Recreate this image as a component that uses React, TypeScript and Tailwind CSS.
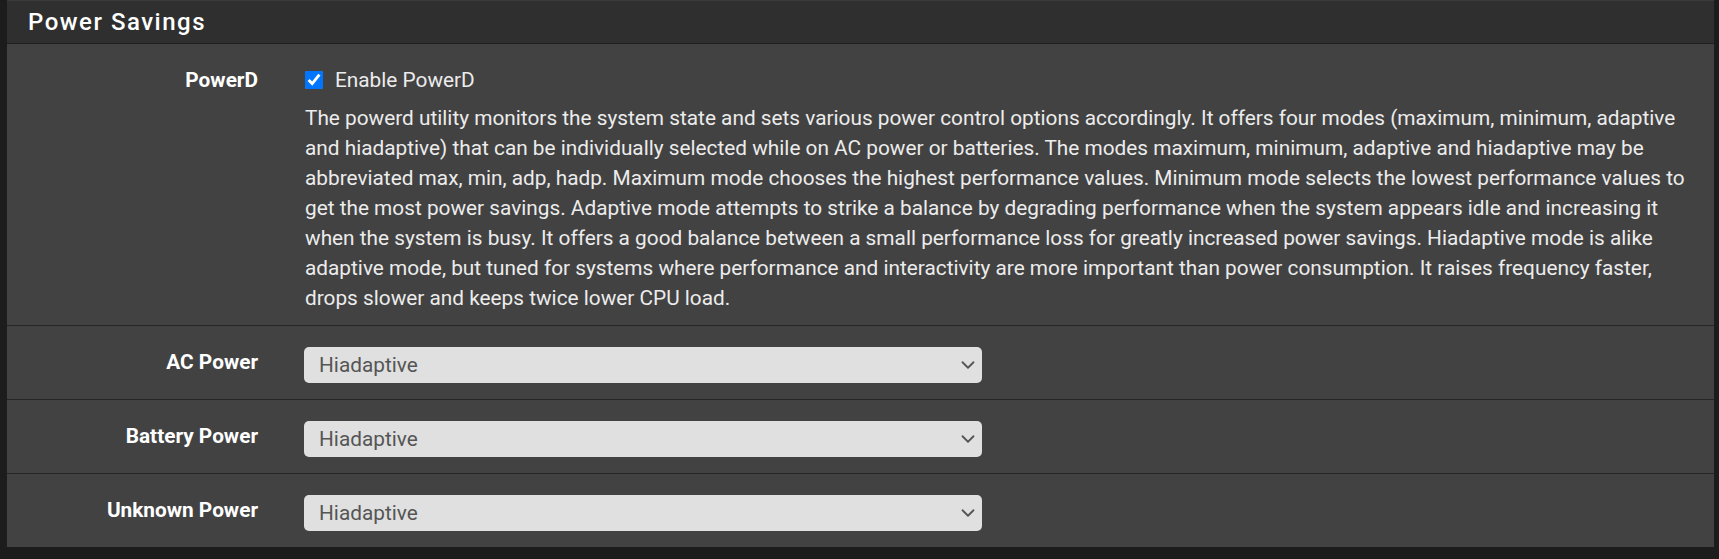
import React, { useState } from 'react';
import { ChevronDown } from 'lucide-react';

const description =
    'The powerd utility monitors the system state and sets various power control options accordingly. It offers four modes (maximum, minimum, adaptive and hiadaptive) that can be individually selected while on AC power or batteries. The modes maximum, minimum, adaptive and hiadaptive may be abbreviated max, min, adp, hadp. Maximum mode chooses the highest performance values. Minimum mode selects the lowest performance values to get the most power savings. Adaptive mode attempts to strike a balance by degrading performance when the system appears idle and increasing it when the system is busy. It offers a good balance between a small performance loss for greatly increased power savings. Hiadaptive mode is alike adaptive mode, but tuned for systems where performance and interactivity are more important than power consumption. It raises frequency faster, drops slower and keeps twice lower CPU load.';

const modes = ['Maximum', 'Minimum', 'Adaptive', 'Hiadaptive'];

const ModeSelect: React.FC<{ value: string; onChange: (v: string) => void }> = ({ value, onChange }) => (
    <div className="relative w-[678px]">
        <select
            value={value}
            onChange={(e) => onChange(e.target.value)}
            className="appearance-none w-full h-[36px] pl-[15px] pr-10 rounded-[5px] bg-[#e0e0e0] text-[#555555] text-[20.8px] leading-[36px] outline-none"
        >
            {modes.map(m => <option key={m} value={m}>{m}</option>)}
        </select>
        <ChevronDown className="pointer-events-none absolute right-[3px] top-1/2 -translate-y-1/2 w-[22px] h-[22px] text-[#555555]" strokeWidth={2} />
    </div>
);

export default function App() {
    const [enabled, setEnabled] = useState(true);
    const [ac, setAc] = useState('Hiadaptive');
    const [battery, setBattery] = useState('Hiadaptive');
    const [unknown, setUnknown] = useState('Hiadaptive');

    const rows = [
        { label: 'AC Power', value: ac, set: setAc },
        { label: 'Battery Power', value: battery, set: setBattery },
        { label: 'Unknown Power', value: unknown, set: setUnknown },
    ];

    return (
        <div className="min-h-screen bg-[#1c1c1c] pl-[7px] pr-[5px] pb-[12px] font-['Roboto','Liberation_Sans',sans-serif]">
            <div className="bg-[#424242] border-t border-[#3a3a3a]">
                {/* header */}
                <div className="h-[43px] flex items-center px-[21px] bg-[#2f2f2f] border-b border-[#1f1f1f]">
                    <h2 className="text-[24px] font-medium tracking-[1.5px] text-white">Power Savings</h2>
                </div>

                {/* PowerD */}
                <div className="flex pt-[21px] pb-[12px] text-[20.8px] leading-[30px]">
                    <div className="w-[251px] shrink-0 text-right font-bold text-white">PowerD</div>
                    <div className="ml-[47px] pr-[12px] flex-1">
                        <label className="flex items-center gap-[12px] text-[#ececec]">
                            <input
                                type="checkbox"
                                checked={enabled}
                                onChange={(e) => setEnabled(e.target.checked)}
                                className="w-[18px] h-[18px] m-0"
                            />
                            Enable PowerD
                        </label>
                        <p className="mt-[8px] text-[#ececec]">{description}</p>
                    </div>
                </div>

                {rows.map(r => (
                    <div key={r.label} className="flex items-start border-t border-[#262626] pt-[21px] pb-[16px] text-[20.8px] leading-[30px]">
                        <div className="w-[251px] shrink-0 text-right font-bold text-white">{r.label}</div>
                        <div className="ml-[46px]">
                            <ModeSelect value={r.value} onChange={r.set} />
                        </div>
                    </div>
                ))}
            </div>
        </div>
    );
}
